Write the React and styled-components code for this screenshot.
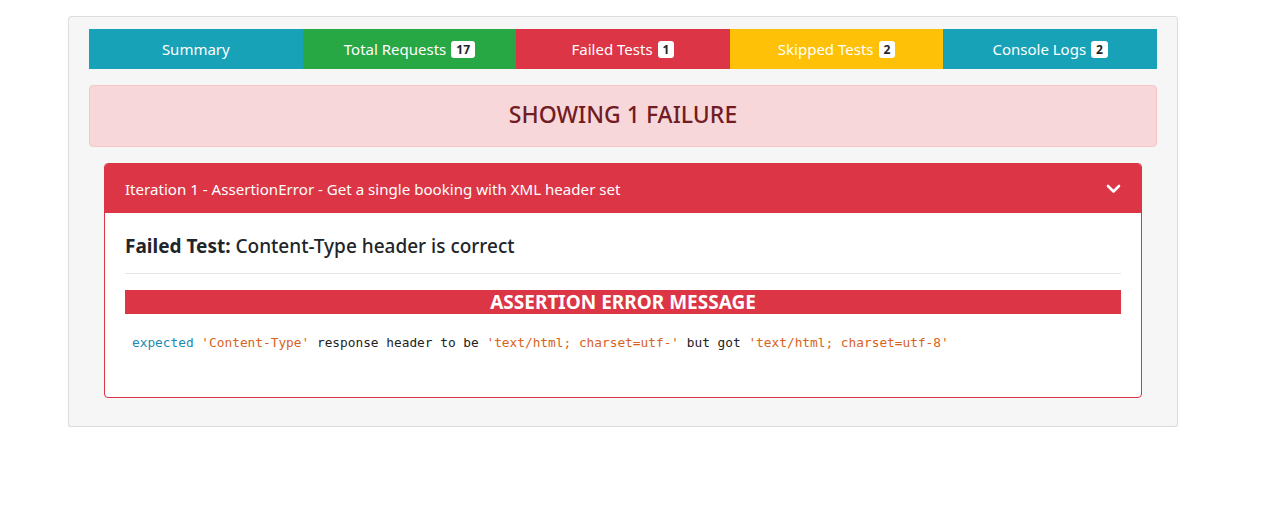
import React from 'react';
import styled, { createGlobalStyle } from 'styled-components';

const GlobalStyle = createGlobalStyle`
  html, body {
    margin: 0;
    padding: 0;
    background: #fff;
    font-family: "Noto Sans", "Open Sans", Arial, sans-serif;
    color: #212529;
  }
`;

const Page = styled.div`
  width: 1110px;
  margin: 16px 0 0 68px;
  box-sizing: border-box;
  background: #f6f6f6;
  border: 1px solid #dcdcdc;
  border-radius: 3px;
  box-shadow: 0 2px 1px rgba(0, 0, 0, 0.08);
  padding: 12px 20px 28px;
`;

const Tabs = styled.nav`
  display: grid;
  grid-template-columns: repeat(5, 1fr);
  height: 40px;
`;

const Tab = styled.div`
  display: flex;
  align-items: center;
  justify-content: center;
  gap: 5px;
  background: ${(p) => p.$bg};
  color: #fff;
  font-size: 15px;
`;

const Badge = styled.span`
  display: inline-block;
  background: #fff;
  color: #212529;
  font-size: 12px;
  font-weight: 700;
  line-height: 1;
  padding: 3px 5px 2px;
  border-radius: 3px;
`;

const Alert = styled.div`
  margin-top: 16px;
  height: 62px;
  box-sizing: border-box;
  display: flex;
  align-items: center;
  justify-content: center;
  padding-bottom: 5px;
  background: #f8d7da;
  border: 1px solid #f5c6cb;
  border-radius: 4px;
  color: #721c24;
  font-size: 23px;
  font-weight: 500;
`;

const Card = styled.section`
  margin: 16px 15px 0;
  background: #fff;
  border: 1px solid #dc3545;
  border-radius: 4px;
  overflow: hidden;
`;

const CardHeader = styled.header`
  height: 49px;
  display: flex;
  align-items: center;
  justify-content: space-between;
  padding: 0 20px;
  background: #dc3545;
  color: #fff;
  font-size: 15.1px;
`;

const CardBody = styled.div`
  padding: 20px 20px 45px;
`;

const TestTitle = styled.h4`
  margin: 0;
  font-size: 19px;
  font-weight: 500;
  line-height: 26px;
  color: #212529;

  strong {
    font-weight: 700;
  }
`;

const Divider = styled.hr`
  margin: 14px 0 16px;
  border: 0;
  border-top: 1px solid #e5e5e5;
`;

const ErrorBar = styled.div`
  background: #dc3545;
  color: #fff;
  text-align: center;
  font-size: 19px;
  font-weight: 700;
  line-height: 24px;
  height: 24px;
`;

const Code = styled.pre`
  margin: 20px 0 0 7px;
  font-family: "DejaVu Sans Mono", "Liberation Mono", monospace;
  font-size: 12.8px;
  line-height: 18px;
  color: #222;
`;

const Token = styled.span`
  color: ${(p) => (p.$kind === 'kw' ? '#1b8bb4' : '#d8621d')};
`;

const tabs = [
  { label: 'Summary', bg: '#17a2b8' },
  { label: 'Total Requests', bg: '#28a745', count: 17 },
  { label: 'Failed Tests', bg: '#dc3545', count: 1 },
  { label: 'Skipped Tests', bg: '#ffc107', count: 2 },
  { label: 'Console Logs', bg: '#17a2b8', count: 2 },
];

export default function App() {
  return (
    <>
      <GlobalStyle />
      <Page>
        <Tabs>
          {tabs.map((t) => (
            <Tab key={t.label} $bg={t.bg}>
              {t.label}
              {t.count !== undefined && <Badge>{t.count}</Badge>}
            </Tab>
          ))}
        </Tabs>

        <Alert>SHOWING 1 FAILURE</Alert>

        <Card>
          <CardHeader>
            <span>Iteration 1 - AssertionError - Get a single booking with XML header set</span>
            <svg width="15" height="10" viewBox="0 0 15 10">
              <polyline points="2,2 7.5,7.5 13,2" fill="none" stroke="#fff" strokeWidth="2.6" strokeLinecap="round" strokeLinejoin="round" />
            </svg>
          </CardHeader>
          <CardBody>
            <TestTitle><strong>Failed Test:</strong> Content-Type header is correct</TestTitle>
            <Divider />
            <ErrorBar>ASSERTION ERROR MESSAGE</ErrorBar>
            <Code>
              <Token $kind="kw">expected</Token> <Token>'Content-Type'</Token> response header to be <Token>'text/html; charset=utf-'</Token> but got <Token>'text/html; charset=utf-8'</Token>
            </Code>
          </CardBody>
        </Card>
      </Page>
    </>
  );
}
